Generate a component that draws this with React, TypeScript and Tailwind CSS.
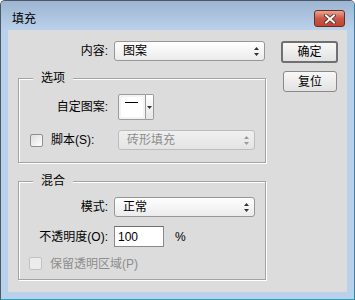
import React from "react";

interface SelectProps {
  value: string;
  disabled?: boolean;
  className?: string;
}

function UpDown({ color }: { color: string }) {
  return (
    <svg width="7" height="11" viewBox="0 0 7 11">
      <path d="M3.5 1 L6 4 L1 4 Z M1 7 L6 7 L3.5 10 Z" fill={color} />
    </svg>
  );
}

function Select({ value, disabled, className = "" }: SelectProps) {
  return (
    <div
      className={`flex h-[20px] items-center justify-between rounded-[3px] border pl-[8px] pr-[4px] ${
        disabled
          ? "border-[#bdbdbd] bg-linear-to-b from-[#f0f0f0] to-[#e4e4e4] text-[#8d8d8d]"
          : "border-[#979797] bg-linear-to-b from-white to-[#ebebeb]"
      } ${className}`}
    >
      <span className="leading-[14px]">{value}</span>
      <UpDown color={disabled ? "#9a9a9a" : "#333"} />
    </div>
  );
}

function Checkbox({ disabled }: { disabled?: boolean }) {
  return (
    <div
      className={`h-[13px] w-[13px] shrink-0 rounded-[2px] border ${
        disabled
          ? "border-[#c2c2c2] bg-[#ececec]"
          : "border-[#8e8f8f] bg-linear-to-br from-[#dedede] to-white"
      }`}
    />
  );
}

function Group({
  title,
  className = "",
  children,
}: {
  title: string;
  className?: string;
  children: React.ReactNode;
}) {
  return (
    <div
      className={`relative border border-[#a3a3a3] shadow-[inset_1px_1px_0_#fff,1px_1px_0_#fff] ${className}`}
    >
      <span className="absolute -top-[8px] left-[14px] bg-[#dcdcdc] px-[8px] leading-[14px]">
        {title}
      </span>
      {children}
    </div>
  );
}

function PatternPicker({ className = "" }: { className?: string }) {
  return (
    <div className={`flex h-[26px] ${className}`}>
      <div className="flex w-[28px] rounded-l-[2px] border border-[#9a9a9a] bg-[#f3f3f3] p-[2px]">
        <div className="flex-1 bg-white pt-[5px] pl-[4px]">
          <div className="h-[1px] w-[13px] bg-black" />
        </div>
      </div>
      <div className="flex w-[8px] items-center justify-center rounded-r-[2px] border border-l-0 border-[#9a9a9a] bg-linear-to-b from-white to-[#e6e6e6]">
        <svg width="5" height="3" viewBox="0 0 5 3">
          <path d="M0 0 L5 0 L2.5 3 Z" fill="#333" />
        </svg>
      </div>
    </div>
  );
}

function CloseButton({ className = "" }: { className?: string }) {
  return (
    <div
      className={`flex h-[17px] w-[31px] items-center justify-center rounded-[3px] border border-[#6b2b24] bg-linear-to-b from-[#e8a693] via-[#c9574a] to-[#c0442f] ${className}`}
    >
      <svg width="12" height="10" viewBox="0 0 12 10">
        <path d="M2 1.5 L10 8.5 M10 1.5 L2 8.5" stroke="#5a2a25" strokeWidth="3.6" strokeLinecap="square" />
        <path d="M2 1.5 L10 8.5 M10 1.5 L2 8.5" stroke="#fff" strokeWidth="2" strokeLinecap="square" />
      </svg>
    </div>
  );
}

export default function App() {
  return (
    <div className='h-[300px] w-[355px] font-[family-name:"Liberation_Sans","Noto_Sans_CJK_SC",sans-serif] text-[12px] text-black'>
      <div className="flex h-full w-full flex-col rounded-t-[5px] border border-[#4d5866] border-b-[#2aa3bd] border-r-[#3b7f96] bg-[#b9d1ea]">
        {/* title bar */}
        <div className="flex h-[29px] shrink-0 items-start justify-between rounded-t-[4px] bg-linear-to-b from-[#9db5d1] to-[#b9d1ea] pl-[11px] pr-[9px]">
          <span className="mt-[11px] leading-[14px]">填充</span>
          <CloseButton className="mt-[9px]" />
        </div>

        <div className="mx-[7px] flex h-[262px] bg-[#dcdcdc] pl-[10px] pt-[11px]">
          <div className="w-[248px]">
            <div className="flex h-[20px] items-center">
              <span className="w-[90px] text-right leading-[14px]">内容:</span>
              <Select className="ml-[6px] w-[151px]" value="图案" />
            </div>

            <Group title="选项" className="mt-[17px] pt-[15px] pb-[12px]">
              <div className="flex h-[26px] items-center">
                <span className="w-[89px] text-right leading-[14px]">自定图案:</span>
                <PatternPicker className="ml-[10px]" />
              </div>
              <div className="mt-[10px] flex h-[20px] items-center">
                <div className="flex w-[89px] items-center pl-[11px]">
                  <Checkbox />
                  <span className="ml-[8px] leading-[14px]">脚本(S):</span>
                </div>
                <Select className="ml-[10px] w-[137px]" value="砖形填充" disabled />
              </div>
            </Group>

            <Group title="混合" className="mt-[18px] pt-[15px] pb-[9px]">
              <div className="flex h-[20px] items-center">
                <span className="w-[89px] text-right leading-[14px]">模式:</span>
                <Select className="ml-[6px] w-[141px]" value="正常" />
              </div>
              <div className="mt-[9px] flex h-[21px] items-center">
                <span className="w-[89px] text-right leading-[14px]">不透明度(O):</span>
                <div className="ml-[6px] flex h-full w-[50px] items-center border border-[#8a8a8a] border-t-[#6e6e6e] bg-white pl-[3px] leading-[14px]">
                  100
                </div>
                <span className="ml-[11px] leading-[14px]">%</span>
              </div>
              <div className="mt-[10px] flex h-[13px] items-center pl-[10px]">
                <Checkbox disabled />
                <span className="ml-[8px] leading-[14px] text-[#8d8d8d]">保留透明区域(P)</span>
              </div>
            </Group>
          </div>

          <div className="ml-[15px] flex flex-col">
            <button className="h-[22px] w-[57px] rounded-[3px] border-2 border-[#707070] bg-linear-to-b from-[#f8f8f8] to-[#e2e2e2] leading-[14px]">
              确定
            </button>
            <button className="ml-[2px] mt-[8px] h-[21px] w-[54px] rounded-[3px] border border-[#8a8a8a] bg-linear-to-b from-[#f8f8f8] to-[#e2e2e2] leading-[14px]">
              复位
            </button>
          </div>
        </div>
      </div>
    </div>
  );
}
